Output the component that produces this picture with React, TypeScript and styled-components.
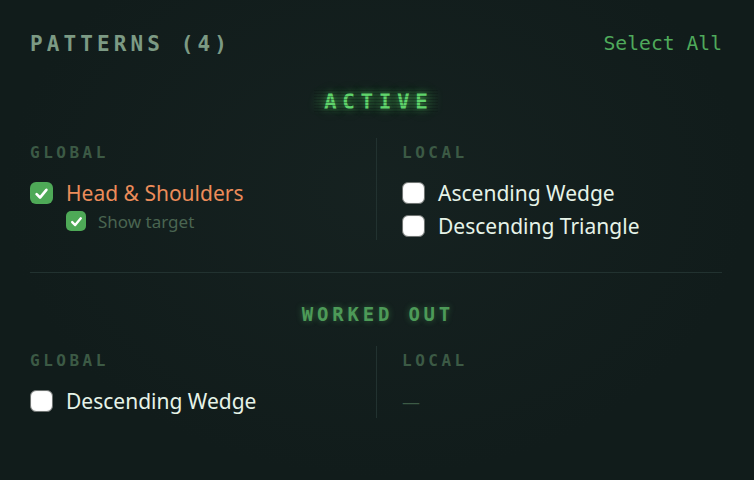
import React from "react";
import styled, { createGlobalStyle, css } from "styled-components";

const GlobalStyle = createGlobalStyle`
  html, body {
    margin: 0;
    padding: 0;
    background: #111c1b;
  }
  body {
    width: 754px;
    height: 480px;
    overflow: hidden;
  }
`;

const MONO = `"DejaVu Sans Mono", "Liberation Mono", monospace`;
const SANS = `"Noto Sans", "Open Sans", sans-serif`;

const Panel = styled.div`
  box-sizing: border-box;
  width: 754px;
  height: 480px;
  padding: 32px 32px 0 30px;
  background:
    radial-gradient(ellipse at 50% 40%, rgba(30, 44, 42, 0.35), rgba(0, 0, 0, 0) 70%),
    #111c1b;
  display: flex;
  flex-direction: column;
`;

const TopBar = styled.div`
  display: flex;
  align-items: center;
  justify-content: space-between;
  height: 24px;
`;

const Title = styled.h2`
  margin: 0;
  font-family: ${MONO};
  font-weight: bold;
  font-size: 21px;
  line-height: 24px;
  letter-spacing: 4.1px;
  color: #7c9a84;
`;

const SelectAll = styled.button`
  border: 0;
  background: none;
  padding: 0;
  font-family: ${MONO};
  font-size: 19.7px;
  line-height: 24px;
  color: #4faa5b;
  cursor: pointer;
`;

const SectionHead = styled.div<{ $top: number; $bottom: number }>`
  display: flex;
  justify-content: center;
  margin-top: ${(p) => p.$top}px;
  margin-bottom: ${(p) => p.$bottom}px;
`;

const SectionTitle = styled.span<{ $active?: boolean }>`
  position: relative;
  font-family: ${MONO};
  font-weight: bold;
  line-height: 24px;
  ${(p) =>
    p.$active
      ? css`
          font-size: 21px;
          letter-spacing: 5.6px;
          margin-right: -5.6px;
          color: #5fd36b;
          text-shadow: 0 0 6px rgba(90, 220, 100, 0.55), 0 0 14px rgba(90, 220, 100, 0.25),
            10px 0 8px rgba(90, 220, 100, 0.2), -10px 0 8px rgba(90, 220, 100, 0.2);
          &::after {
            content: "";
            position: absolute;
            left: -10px;
            right: -4px;
            top: 0;
            bottom: 0;
            background: repeating-linear-gradient(
              to bottom,
              rgba(10, 20, 18, 0.35) 0px,
              rgba(10, 20, 18, 0.35) 1px,
              rgba(0, 0, 0, 0) 1px,
              rgba(0, 0, 0, 0) 3px
            );
            pointer-events: none;
          }
        `
      : css`
          font-size: 19px;
          letter-spacing: 3.8px;
          margin-right: -3.8px;
          color: #4d9a58;
          text-shadow: 0 0 6px rgba(80, 180, 95, 0.45);
        `}
`;

const Columns = styled.div`
  display: grid;
  grid-template-columns: 1fr 1fr;
`;

const Column = styled.div<{ $right?: boolean; $height: number }>`
  display: flex;
  flex-direction: column;
  height: ${(p) => p.$height}px;
  ${(p) =>
    p.$right &&
    css`
      border-left: 1px solid #223230;
      padding-left: 25px;
    `}
`;

const ColLabel = styled.div`
  font-family: ${MONO};
  font-weight: bold;
  font-size: 16px;
  letter-spacing: 3.5px;
  line-height: 30px;
  color: #3c5a45;
  margin-bottom: 11px;
`;

const List = styled.div`
  display: flex;
  flex-direction: column;
  gap: 5px;
`;

const Row = styled.label<{ $sub?: boolean }>`
  display: flex;
  align-items: center;
  gap: ${(p) => (p.$sub ? 12 : 13)}px;
  height: ${(p) => (p.$sub ? 22 : 28)}px;
  margin-left: ${(p) => (p.$sub ? 36 : 0)}px;
  margin-top: ${(p) => (p.$sub ? -2 : 0)}px;
`;

const Box = styled.span<{ $checked?: boolean; $small?: boolean }>`
  box-sizing: border-box;
  flex: none;
  width: ${(p) => (p.$small ? 20 : 23)}px;
  height: ${(p) => (p.$small ? 20 : 22)}px;
  border-radius: ${(p) => (p.$small ? 5 : 6)}px;
  display: flex;
  align-items: center;
  justify-content: center;
  ${(p) =>
    p.$checked
      ? css`
          background: #4ea957;
        `
      : css`
          background: #ffffff;
          border: 1.5px solid #6f7472;
          box-shadow: inset 0 0 1px rgba(0, 0, 0, 0.3);
        `}
`;

const Label = styled.span<{ $tone: "orange" | "light" | "dim" }>`
  font-family: ${SANS};
  font-size: ${(p) => (p.$tone === "dim" ? 17 : 21)}px;
  line-height: 1;
  white-space: nowrap;
  color: ${(p) =>
    p.$tone === "orange" ? "#ec8c5a" : p.$tone === "dim" ? "#4a6551" : "#e6f3e8"};
`;

const Rule = styled.hr`
  border: 0;
  height: 1px;
  margin: 32px 0 0 0;
  background: #223230;
`;

const Empty = styled.span`
  font-family: ${SANS};
  font-size: 18px;
  line-height: 30px;
  color: #3c5a45;
`;

const Check = ({ small }: { small?: boolean }) => (
  <svg width={small ? 15 : 17} height={small ? 15 : 17} viewBox="0 0 16 16" fill="none">
    <path
      d="M3.4 8.6 L6.6 11.8 L12.6 4.6"
      stroke="#ffffff"
      strokeWidth={2.5}
      strokeLinecap="round"
      strokeLinejoin="round"
    />
  </svg>
);

const Item = ({
  text,
  checked,
  tone,
  sub,
}: {
  text: string;
  checked?: boolean;
  tone: "orange" | "light" | "dim";
  sub?: boolean;
}) => (
  <Row $sub={sub}>
    <Box $checked={checked} $small={sub}>
      {checked && <Check small={sub} />}
    </Box>
    <Label $tone={tone}>{text}</Label>
  </Row>
);

export default function App() {
  return (
    <>
      <GlobalStyle />
      <Panel>
        <TopBar>
          <Title>PATTERNS (4)</Title>
          <SelectAll>Select All</SelectAll>
        </TopBar>

        <SectionHead $top={34} $bottom={24}>
          <SectionTitle $active>ACTIVE</SectionTitle>
        </SectionHead>
        <Columns>
          <Column $height={102}>
            <ColLabel>GLOBAL</ColLabel>
            <List>
              <Item text="Head & Shoulders" checked tone="orange" />
              <Item text="Show target" checked tone="dim" sub />
            </List>
          </Column>
          <Column $right $height={102}>
            <ColLabel>LOCAL</ColLabel>
            <List>
              <Item text="Ascending Wedge" tone="light" />
              <Item text="Descending Triangle" tone="light" />
            </List>
          </Column>
        </Columns>

        <Rule />

        <SectionHead $top={29} $bottom={20}>
          <SectionTitle>WORKED OUT</SectionTitle>
        </SectionHead>
        <Columns>
          <Column $height={72}>
            <ColLabel>GLOBAL</ColLabel>
            <List>
              <Item text="Descending Wedge" tone="light" />
            </List>
          </Column>
          <Column $right $height={72}>
            <ColLabel>LOCAL</ColLabel>
            <List>
              <Empty>—</Empty>
            </List>
          </Column>
        </Columns>
      </Panel>
    </>
  );
}
